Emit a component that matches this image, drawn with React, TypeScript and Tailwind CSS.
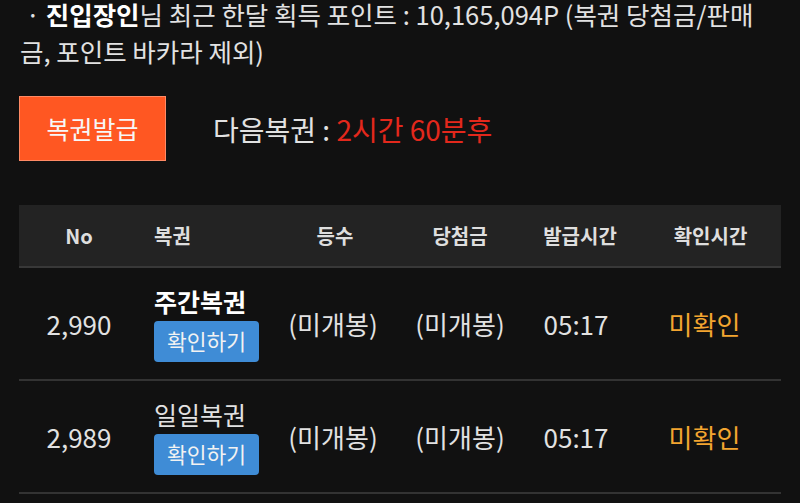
const rows = [
  { no: "2,990", name: "주간복권", bold: true, rank: "(미개봉)", prize: "(미개봉)", issued: "05:17", checked: "미확인" },
  { no: "2,989", name: "일일복권", bold: false, rank: "(미개봉)", prize: "(미개봉)", issued: "05:17", checked: "미확인" },
]

const cols = "grid grid-cols-[120px_131px_130px_120px_120px_141px]"

export default function App() {
  return (
    <div
      className="h-[503px] w-[800px] overflow-hidden bg-[#111111] text-[#e2e2e2]"
      style={{ fontFamily: '"Noto Sans CJK KR", "Noto Sans", sans-serif' }}
    >
      {/* POINT SUMMARY */}
      <p className="-mt-[5px] px-5 text-[25.5px] leading-[37px]">
        <span className="whitespace-nowrap">
          &nbsp;· <b className="font-bold text-white">진입장인</b>님 최근 한달 획득 포인트 : 10,165,094P (복권 당첨금/판매
        </span>
        <br />
        금, 포인트 바카라 제외)
      </p>

      {/* ISSUE BUTTON */}
      <div className="mt-[27px] flex items-center px-[19px]">
        <button className="h-[65px] w-[147px] border border-[#ff8a65] bg-[#ff5722] text-[25px] text-[#f7f7f7]">
          복권발급
        </button>
        <div className="ml-[47px] text-[28px]">
          다음복권 : <span className="text-[#e3281c]">2시간 60분후</span>
        </div>
      </div>

      {/* TABLE */}
      <div className="mx-[19px] mt-[44px]">
        <div className={`${cols} h-[63px] items-center border-b-2 border-[#383838] bg-[#232323] text-[20px] font-bold text-[#dedede]`}>
          <div className="text-center">No</div>
          <div className="pl-[15px]">복권</div>
          <div className="text-center">등수</div>
          <div className="text-center">당첨금</div>
          <div className="text-center">발급시간</div>
          <div className="text-center">확인시간</div>
        </div>

        {rows.map((r) => (
          <div key={r.no} className={`${cols} h-[113px] items-center border-b-2 border-[#333333] text-[26px]`}>
            <div className="text-center">{r.no}</div>
            <div className="flex flex-col items-start pl-[15px]">
              <div className={`text-[25px] leading-[32px] ${r.bold ? "font-bold text-white" : ""}`}>{r.name}</div>
              <button className="mt-[4px] h-[41px] w-[105px] rounded-[4px] bg-[#3f8cd6] text-[21.5px] text-[#f2f2f2]">
                확인하기
              </button>
            </div>
            <div className="pr-[4px] text-center">{r.rank}</div>
            <div className="text-center">{r.prize}</div>
            <div className="pr-[8px] text-center">{r.issued}</div>
            <div className="pr-[12px] text-center text-[#f3a530]">{r.checked}</div>
          </div>
        ))}
      </div>
    </div>
  )
}
